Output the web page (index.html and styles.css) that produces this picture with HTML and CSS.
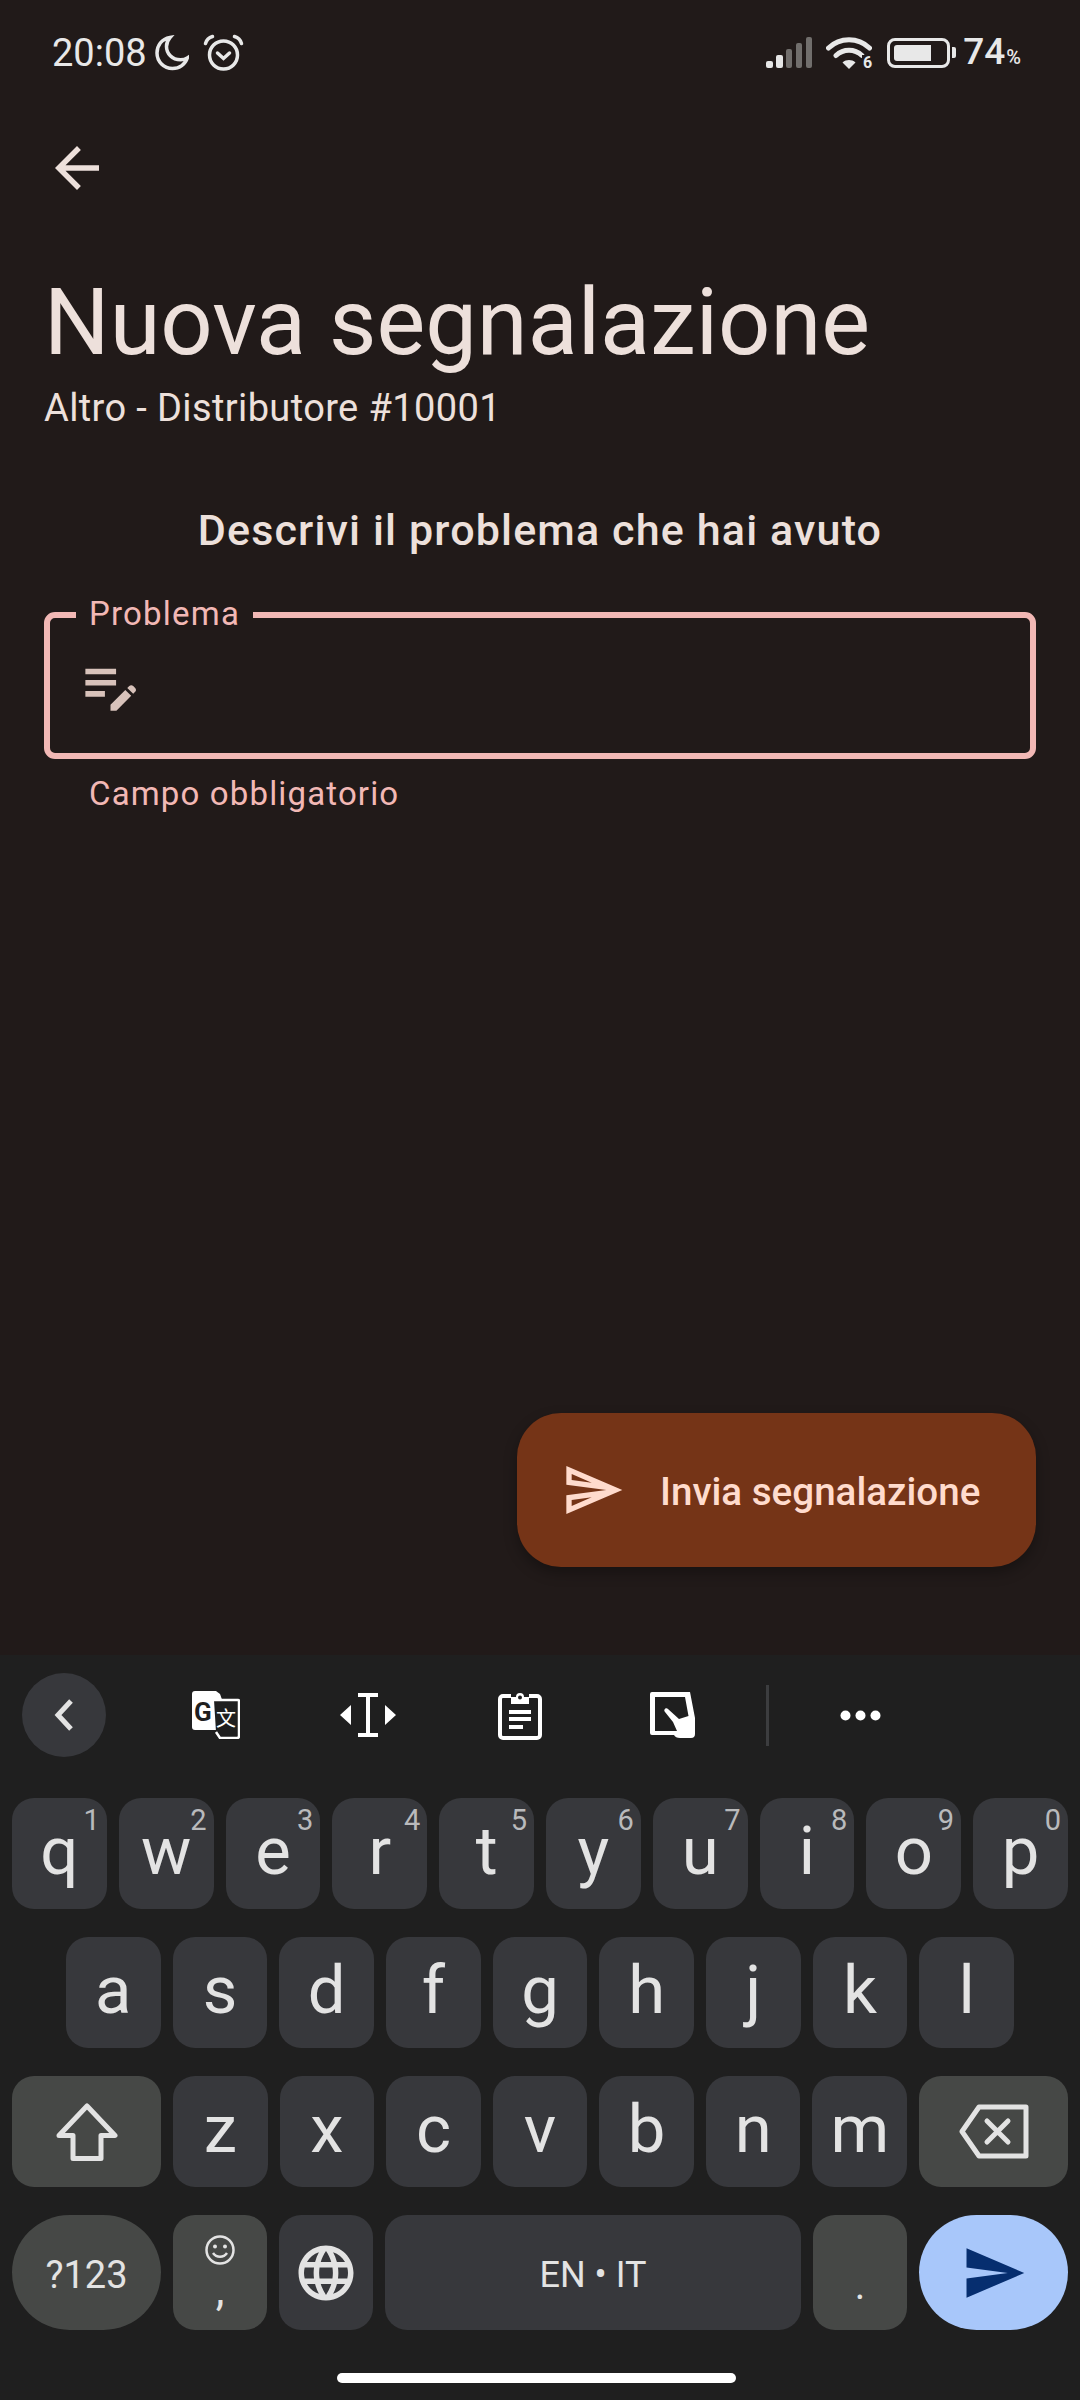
FILE: index.html
```html
<!DOCTYPE html>
<html lang="it">
<head>
    <meta charset="UTF-8">
    <meta name="viewport" content="width=device-width, initial-scale=1.0">
    <title>Nuova segnalazione</title>
    <link rel="stylesheet" href="styles.css">
</head>
<body>
<div class="screen">
    <main class="app">
        <!-- status bar -->
        <div class="status">
            <div class="status-left">
                <span class="clock">20:08</span>
                <svg class="moon" viewBox="0 0 34 36"><path d="M15 2.500C6.500 4 2 10.500 2 18c0 8.500 6.800 15.500 15.500 15.500 7 0 12.800-4.300 14.800-10.500-1.800 1.200-4.300 1.800-6.800 1.800C17 24.800 11.500 18.500 11.500 11.500c0-3.300 1.300-6.500 3.500-9z"/></svg>
                <svg class="alarm" viewBox="0 0 41 37"><circle cx="20.500" cy="21" r="14"/><path d="M14.500 19l6 5.500 6-5.500"/><path d="M2.500 9.500C3.500 6 6 3.500 9.500 2.500"/><path d="M38.500 9.500C37.500 6 35 3.500 31.500 2.500"/></svg>
            </div>
            <div class="status-right">
                <svg class="signal" viewBox="0 0 46 31">
                    <rect x="0" y="24" width="7" height="7" rx="2" fill="#e6e6e6"/>
                    <rect x="10" y="18" width="7" height="13" rx="2" fill="#e6e6e6"/>
                    <rect x="20" y="12" width="6" height="19" rx="2" fill="#716e6c"/>
                    <rect x="30" y="6" width="6" height="25" rx="2" fill="#716e6c"/>
                    <rect x="40" y="0" width="6" height="31" rx="2" fill="#716e6c"/>
                </svg>
                <div class="wifi">
                    <svg viewBox="0 0 46 33"><path d="M2.500 12C14 1 32 1 43.500 12M10 19.500c7.500-7 18.500-7 26 0"/><path class="wifi-dot" d="M16.500 26.500c4-3.200 9-3.200 13 0L23 33z"/></svg>
                    <span class="wifi-gen">6</span>
                </div>
                <div class="battery"><div class="battery-level"></div></div>
                <span class="battery-nub"></span>
                <span class="percent">74<small>%</small></span>
            </div>
        </div>

        <div class="appbar">
            <svg class="back" viewBox="0 0 24 24"><path d="M20 11H7.830l5.590-5.590L12 4l-8 8 8 8 1.410-1.410L7.830 13H20v-2z"/></svg>
        </div>

        <div class="content">
            <h1 class="title">Nuova segnalazione</h1>
            <p class="subtitle">Altro - Distributore #10001</p>
            <h2 class="prompt">Descrivi il problema che hai avuto</h2>

            <div class="field">
                <span class="field-label">Problema</span>
                <svg class="field-icon" viewBox="0 0 24 24"><path d="M3 10h11v2H3v-2zm0-2h11V6H3v2zm0 8h7v-2H3v2zm15.010-3.130l.71-.71c.39-.39 1.020-.39 1.410 0l.71.71c.39.39.39 1.020 0 1.410l-.71.71-2.120-2.120zm-.71.71l-5.300 5.300V21h2.120l5.300-5.300-2.120-2.120z"/></svg>
            </div>
            <p class="helper">Campo obbligatorio</p>
        </div>

        <button class="fab" type="button">
            <svg viewBox="0 0 24 24"><path d="M4.010 6.030l7.510 3.220-7.520-1 .01-2.220m7.500 8.720L4 17.970v-2.220l7.510-1M2.010 3L2 10l15 2-15 2 .01 7L23 12 2.010 3z"/></svg>
            <span class="fab-text">Invia segnalazione</span>
        </button>
    </main>

    <section class="keyboard">
        <div class="kb-tools">
            <span class="kb-collapse">
                <svg viewBox="0 0 20 34"><path d="M17 3L4 17l13 14"/></svg>
            </span>
            <span class="kb-tool">
                <svg class="tool-translate" viewBox="0 0 48 48">
                    <path d="M3 0h21l4 3 13 36H3a3 3 0 0 1-3-3V3a3 3 0 0 1 3-3z" fill="#fff"/>
                    <text class="translate-g" x="2" y="30">G</text>
                    <path d="M22 9h24a1 1 0 0 1 1 1v35a2 2 0 0 1-2 2H28l-4-6" fill="#1f1f1f" stroke="#fff" stroke-width="2.500"/>
                    <text class="translate-zh" x="24" y="35">文</text>
                </svg>
            </span>
            <span class="kb-tool">
                <svg class="tool-cursor" viewBox="0 0 56 44">
                    <path d="M18 2h20M18 42h20M28 2v40" fill="none" stroke="#fff" stroke-width="4"/>
                    <path d="M11 12v20L0 22zM45 12v20l11-10z" fill="#fff"/>
                </svg>
            </span>
            <span class="kb-tool">
                <svg class="tool-clip" viewBox="0 0 44 50">
                    <path d="M13 6H5a3 3 0 0 0-3 3v36a3 3 0 0 0 3 3h34a3 3 0 0 0 3-3V9a3 3 0 0 0-3-3h-8" fill="none" stroke="#fff" stroke-width="4"/>
                    <path d="M13 14V7h5a4 4 0 0 1 8 0h5v7z" fill="#fff"/>
                    <circle cx="22" cy="7.500" r="2" fill="#1f1f1f"/>
                    <path d="M11 22h22M11 29h22M11 37h14" fill="none" stroke="#fff" stroke-width="4"/>
                </svg>
            </span>
            <span class="kb-tool">
                <svg class="tool-sticker" viewBox="0 0 45 47">
                    <path d="M2 0h38l5 26v16a4 4 0 0 1-4 4H30c-3 0-5-1-6-3H2a2 2 0 0 1-2-2V2a2 2 0 0 1 2-2z" fill="#fff"/>
                    <path d="M5 5h30l3.500 19-9.500 3-11-10c-2-2-5 1-3 3l8 10 4 9H5z" fill="#1f1f1f"/>
                </svg>
            </span>
            <span class="kb-divider"></span>
            <span class="kb-tool">
                <svg class="tool-more" viewBox="0 0 41 11"><circle cx="5.500" cy="5.500" r="5"/><circle cx="20.500" cy="5.500" r="5"/><circle cx="35.500" cy="5.500" r="5"/></svg>
            </span>
        </div>

        <div class="kb-row">
            <span class="key">q<sup>1</sup></span>
            <span class="key">w<sup>2</sup></span>
            <span class="key">e<sup>3</sup></span>
            <span class="key">r<sup>4</sup></span>
            <span class="key">t<sup>5</sup></span>
            <span class="key">y<sup>6</sup></span>
            <span class="key">u<sup>7</sup></span>
            <span class="key">i<sup>8</sup></span>
            <span class="key">o<sup>9</sup></span>
            <span class="key">p<sup>0</sup></span>
        </div>
        <div class="kb-row kb-row-home">
            <span class="key">a</span>
            <span class="key">s</span>
            <span class="key">d</span>
            <span class="key">f</span>
            <span class="key">g</span>
            <span class="key">h</span>
            <span class="key">j</span>
            <span class="key">k</span>
            <span class="key">l</span>
        </div>
        <div class="kb-row">
            <span class="key key-fn key-wide">
                <svg class="key-shift" viewBox="0 0 62 58"><path d="M31 3L59 32.500H45V55.500H17V32.500H3z"/></svg>
            </span>
            <span class="key">z</span>
            <span class="key">x</span>
            <span class="key">c</span>
            <span class="key">v</span>
            <span class="key">b</span>
            <span class="key">n</span>
            <span class="key">m</span>
            <span class="key key-fn key-wide">
                <svg class="key-del" viewBox="0 0 70 55"><path d="M3 27.500L20 3h47v49H20z"/><path d="M28 17l21 21M49 17L28 38"/></svg>
            </span>
        </div>
        <div class="kb-row kb-row-bottom">
            <span class="key key-fn key-wide key-round key-sym">?123</span>
            <span class="key key-fn key-emoji">
                <svg viewBox="0 0 30 30"><circle cx="15" cy="15" r="13.500"/><circle class="eye" cx="10" cy="11.500" r="2"/><circle class="eye" cx="20" cy="11.500" r="2"/><path d="M8 18c3.500 5 10.500 5 14 0"/></svg>
                <span class="emoji-comma">,</span>
            </span>
            <span class="key key-plain">
                <svg class="key-globe" viewBox="0 0 24 24"><path d="M11.990 2C6.470 2 2 6.480 2 12s4.470 10 9.990 10C17.520 22 22 17.520 22 12S17.520 2 11.990 2zm6.930 6h-2.950c-.32-1.250-.78-2.450-1.380-3.560 1.840.63 3.370 1.910 4.330 3.560zM12 4.040c.83 1.200 1.480 2.530 1.910 3.960h-3.820c.43-1.430 1.080-2.760 1.910-3.960zM4.260 14C4.100 13.360 4 12.690 4 12s.1-1.360.26-2h3.380c-.08.66-.14 1.320-.14 2 0 .68.06 1.340.14 2H4.260zm.82 2h2.950c.32 1.250.78 2.450 1.380 3.560-1.840-.63-3.370-1.900-4.330-3.560zm2.950-8H5.080c.96-1.660 2.490-2.930 4.330-3.560C8.810 5.550 8.350 6.750 8.030 8zM12 19.960c-.83-1.200-1.480-2.530-1.910-3.960h3.820c-.43 1.430-1.080 2.760-1.910 3.960zM14.340 14H9.660c-.09-.66-.16-1.320-.16-2 0-.68.07-1.350.16-2h4.680c.09.65.16 1.320.16 2 0 .68-.07 1.340-.16 2zm.25 5.560c.6-1.110 1.060-2.310 1.380-3.560h2.950c-.96 1.650-2.490 2.930-4.330 3.560zM16.360 14c.08-.66.14-1.320.14-2 0-.68-.06-1.340-.14-2h3.380c.16.64.26 1.310.26 2s-.1 1.360-.26 2h-3.380z"/></svg>
            </span>
            <span class="key key-space">EN • IT</span>
            <span class="key key-fn key-period">.</span>
            <span class="key key-plain key-wide key-round key-send">
                <svg viewBox="0 0 24 24"><path d="M2.010 21L23 12 2.010 3 2 10l15 2-15 2z"/></svg>
            </span>
        </div>
        <div class="home-bar"></div>
    </section>
</div>
</body>
</html>
```

FILE: styles.css
```css
* {
    box-sizing: border-box;
}

body {
    margin: 0;
    font-family: 'Roboto', 'Noto Sans', sans-serif;
    background-color: #211a19;
}

.screen {
    width: 1080px;
    height: 2400px;
    display: flex;
    flex-direction: column;
    overflow: hidden;
}

/* app */

.app {
    height: 1655px;
    display: flex;
    flex-direction: column;
    background-color: #211a19;
    color: #ede0db;
}

.status {
    height: 105px;
    padding: 0 59px 0 52px;
    display: flex;
    align-items: center;
    justify-content: space-between;
    color: #e8e8e8;
}

.status-left,
.status-right {
    display: flex;
    align-items: center;
}

.clock {
    font-size: 38px;
    line-height: 44px;
}

.moon {
    width: 34px;
    height: 36px;
    margin-left: 8px;
    fill: none;
    stroke: #e8e8e8;
    stroke-width: 3.5;
}

.alarm {
    width: 41px;
    height: 37px;
    margin-left: 14px;
    fill: none;
    stroke: #e8e8e8;
    stroke-width: 3.5;
    stroke-linecap: round;
}

.signal {
    width: 46px;
    height: 31px;
}

.wifi {
    position: relative;
    width: 46px;
    height: 33px;
    margin-left: 14px;
}

.wifi svg {
    display: block;
    width: 46px;
    height: 33px;
    fill: none;
    stroke: #e8e8e8;
    stroke-width: 5;
    stroke-linecap: round;
}

.wifi .wifi-dot {
    fill: #e8e8e8;
    stroke: none;
}

.wifi-gen {
    position: absolute;
    right: 0;
    bottom: -2px;
    font-size: 16px;
    line-height: 16px;
    font-weight: 700;
    color: #e8e8e8;
    background-color: #211a19;
    padding-left: 1px;
}

.battery {
    width: 63px;
    height: 30px;
    margin-left: 15px;
    padding: 4px;
    border: 3px solid #e8e8e8;
    border-radius: 8px;
}

.battery-level {
    width: 37px;
    height: 100%;
    background-color: #e8e8e8;
    border-radius: 3px 0 0 3px;
}

.battery-nub {
    width: 4px;
    height: 11px;
    margin-left: 2px;
    background-color: #e8e8e8;
    border-radius: 0 2px 2px 0;
}

.percent {
    margin-left: 7px;
    padding-top: 4px;
    font-size: 37px;
    line-height: 44px;
    font-weight: 500;
}

.percent small {
    font-size: 20px;
    font-weight: 500;
    margin-left: 1px;
}

.appbar {
    height: 126px;
    padding-left: 44px;
    display: flex;
    align-items: center;
}

.back {
    width: 66px;
    height: 66px;
    fill: #ede0db;
}

.content {
    padding: 0 44px;
}

.title {
    margin: 38px 0 0;
    font-size: 92px;
    line-height: 108px;
    font-weight: 400;
}

.subtitle {
    margin: 6px 0 0;
    font-size: 38px;
    line-height: 50px;
    letter-spacing: 0.38px;
}

.prompt {
    margin: 71px 0 0;
    text-align: center;
    font-size: 43px;
    line-height: 52px;
    font-weight: 500;
    letter-spacing: 1.15px;
}

.field {
    position: relative;
    height: 147px;
    margin-top: 56px;
    padding: 0 0 0 27px;
    display: flex;
    align-items: center;
    border: 6px solid #f2b8b5;
    border-radius: 11px;
}

.field-label {
    position: absolute;
    top: -24px;
    left: 26px;
    padding: 0 13px;
    font-size: 33px;
    line-height: 40px;
    letter-spacing: 1.2px;
    color: #f2b8b5;
    background-color: #211a19;
}

.field-icon {
    width: 67px;
    height: 67px;
    fill: #d8c2ba;
}

.helper {
    margin: 15px 0 0 45px;
    font-size: 33px;
    line-height: 40px;
    letter-spacing: 1.15px;
    color: #f2b8b5;
}

.fab {
    height: 154px;
    width: 519px;
    margin: auto 44px 88px auto;
    padding: 0 0 0 44px;
    display: flex;
    align-items: center;
    gap: 35px;
    border: none;
    border-radius: 44px;
    background-color: #753417;
    color: #ffdbcd;
    font-family: inherit;
    font-size: 38.6px;
    font-weight: 500;
    box-shadow: 0 6px 14px rgba(0, 0, 0, 0.3);
}

.fab svg {
    width: 64px;
    height: 64px;
    fill: #ffdbcd;
}

.fab-text {
    padding-top: 3px;
}

/* keyboard */

.keyboard {
    flex: 1;
    display: flex;
    flex-direction: column;
    background-color: #1f1f1f;
    color: #e3e3e3;
}

.kb-tools {
    height: 143px;
    padding: 18px 0 0 22px;
    display: flex;
    align-items: flex-start;
}

.kb-collapse {
    width: 84px;
    height: 84px;
    margin-right: 34px;
    display: flex;
    align-items: center;
    justify-content: center;
    border-radius: 50%;
    background-color: #37383c;
}

.kb-collapse svg {
    width: 20px;
    height: 34px;
    fill: none;
    stroke: #e3e3e3;
    stroke-width: 5;
}

.kb-tool {
    width: 152px;
    height: 84px;
    display: flex;
    align-items: center;
    justify-content: center;
}

.tool-translate {
    width: 48px;
    height: 48px;
}

.translate-g {
    font-family: 'Roboto', sans-serif;
    font-size: 26px;
    font-weight: 700;
    fill: #1f1f1f;
}

.translate-zh {
    font-family: 'Noto Sans CJK SC', sans-serif;
    font-size: 20px;
    fill: #fff;
}

.tool-cursor {
    width: 56px;
    height: 44px;
}

.tool-clip {
    width: 44px;
    height: 50px;
}

.tool-sticker {
    width: 45px;
    height: 47px;
}

.kb-divider {
    width: 3px;
    height: 61px;
    margin: 12px 15px 0 18px;
    background-color: #3c3d3f;
}

.tool-more {
    width: 41px;
    height: 11px;
    fill: #fff;
}

.kb-row {
    height: 111px;
    margin-bottom: 28px;
    padding: 0 12px;
    display: flex;
    gap: 12px;
}

.kb-row-home {
    padding: 0 66px;
}

.kb-row-bottom {
    height: 115px;
    margin-bottom: 0;
}

.key {
    position: relative;
    flex: 1 1 0;
    padding-bottom: 4px;
    display: flex;
    align-items: center;
    justify-content: center;
    border-radius: 22px;
    background-color: #37383c;
    font-size: 67px;
    line-height: 1;
}

.key sup {
    position: absolute;
    top: 8px;
    right: 7px;
    font-size: 29px;
    line-height: 1;
    color: #b9babc;
}

.key-fn,
.key-plain {
    padding-bottom: 0;
}

.key-fn {
    background-color: #464846;
}

.key-wide {
    flex: 0 0 149px;
}

.key-round {
    border-radius: 58px;
}

.key-sym {
    padding-top: 5px;
    font-size: 38px;
}

.key-shift {
    width: 62px;
    height: 58px;
    fill: none;
    stroke: #e3e3e3;
    stroke-width: 5;
    stroke-linejoin: round;
}

.key-del {
    width: 70px;
    height: 55px;
    fill: none;
    stroke: #e3e3e3;
    stroke-width: 5;
    stroke-linejoin: round;
    stroke-linecap: round;
}

.key-emoji {
    flex-direction: column;
    justify-content: flex-start;
    padding-top: 20px;
}

.key-emoji svg {
    width: 30px;
    height: 30px;
    fill: none;
    stroke: #e3e3e3;
    stroke-width: 2.5;
}

.key-emoji .eye {
    fill: #e3e3e3;
    stroke: none;
}

.emoji-comma {
    margin-top: 8px;
    font-size: 44px;
    line-height: 34px;
}

.key-globe {
    width: 66px;
    height: 66px;
    fill: #e3e3e3;
}

.key-space {
    flex: 0 0 416px;
    padding: 5px 0 0;
    font-size: 36px;
}

.key-period {
    font-size: 40px;
    align-items: flex-end;
    padding-bottom: 24px;
}

.key-send {
    background-color: #a8c7fa;
}

.key-send svg {
    width: 66px;
    height: 66px;
    fill: #062e6f;
}

.home-bar {
    width: 399px;
    height: 10px;
    margin: 43px 0 0 337px;
    border-radius: 5px;
    background-color: #fff;
}
```
